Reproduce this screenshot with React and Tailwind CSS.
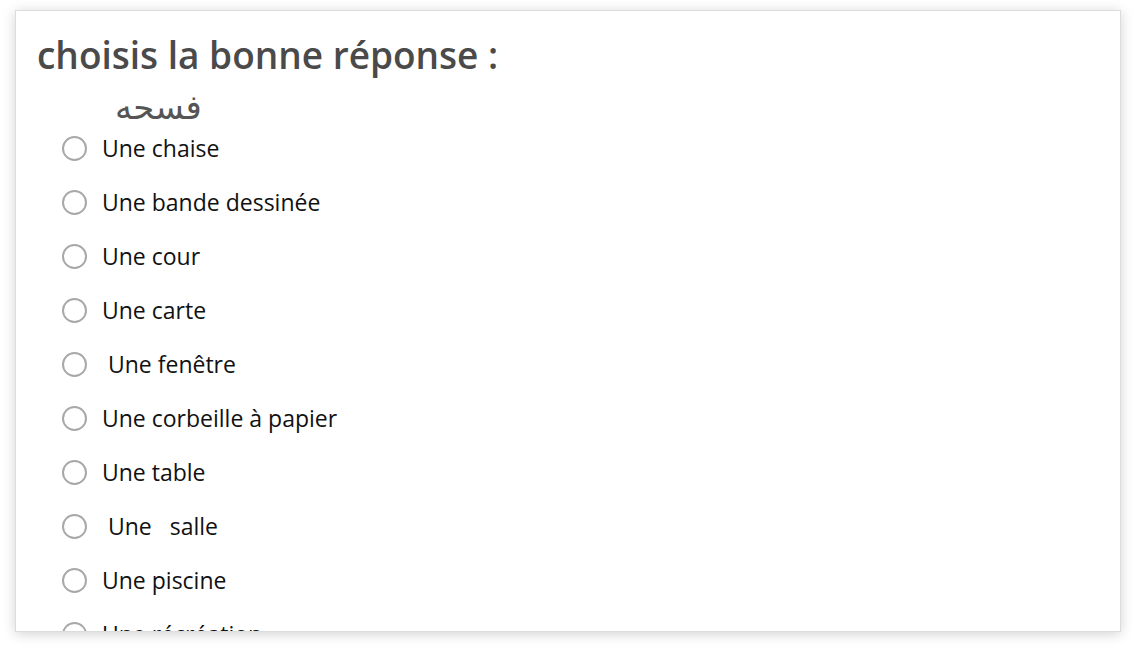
import React from 'react';

const options = [
  'Une chaise',
  'Une bande dessinée',
  'Une cour',
  'Une carte',
  '\u00a0Une fenêtre',
  'Une corbeille à papier',
  'Une table',
  '\u00a0Une \u00a0\u00a0salle',
  'Une piscine',
  'Une récréation',
];

const App = () => {
  return (
    <div className="w-[1136px] h-[652px] bg-white pt-[10px] pl-[15px]" style={{ fontFamily: '"Open Sans", "Noto Sans", sans-serif' }}>
      <div className="w-[1106px] h-[622px] overflow-hidden bg-white border border-[#dcdcdc] shadow-[0_2px_12px_rgba(0,0,0,0.18)] px-[21px] pt-[22px]">
        <h2 className="text-[37px] leading-[44px] font-semibold text-[#4a4a4a]">choisis la bonne réponse :</h2>
        <div className="pl-[78px] mt-[12px] text-[34px] leading-[36px] text-[#555]" style={{ fontFamily: '"DejaVu Sans", "Noto Sans", sans-serif' }}>فسحه</div>
        <div className="flex flex-col pl-[25px] -mt-[4px]">
          {options.map((opt) => (
            <label key={opt} className="flex items-center h-[54px] gap-[15px] text-[23px] text-[#111]">
              <span className="w-[25px] h-[25px] rounded-full border-2 border-[#a8a8a8] shrink-0" />
              <span>{opt}</span>
            </label>
          ))}
        </div>
      </div>
    </div>
  );
};

export default App;
